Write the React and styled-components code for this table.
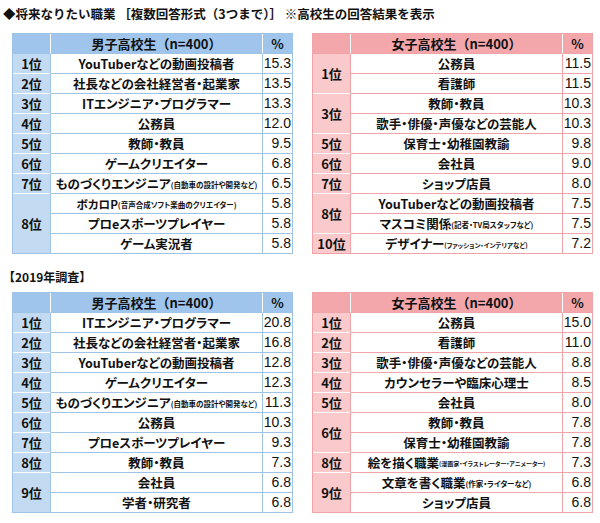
import React from "react";
import styled, { createGlobalStyle } from "styled-components";

const GlobalStyle = createGlobalStyle`
  body {
    margin: 0;
    background: #fff;
    color: #111;
    font-family: "Noto Sans CJK JP", "Noto Sans", sans-serif;
  }
`;

const palettes = {
  boys: { head: "#9fc5ec", rank: "#c3daf3", line: "#9fc3e6" },
  girls: { head: "#f4a7ab", rank: "#f9c9cc", line: "#f1a4a8" },
};

const Page = styled.div`
  width: 600px;
  height: 523px;
  padding: 6px 0 0 3px;
  box-sizing: border-box;
`;

const Title = styled.div`
  font-size: ${(p) => p.$size || 12}px;
  font-weight: 700;
  line-height: 16px;
  white-space: nowrap;
`;

const Section = styled.div`
  display: flex;
  gap: 19px;
  margin: ${(p) => p.$top}px 0 15px 9px;
`;

const Grid = styled.div`
  display: grid;
  grid-template-columns: 38px 1fr 30px;
  grid-auto-rows: 20px;
  width: 281px;
  box-sizing: border-box;
  border-top: 1px solid ${(p) => p.$pal.line};
  border-left: 1px solid ${(p) => p.$pal.line};
`;

const HeadCell = styled.div`
  grid-column: ${(p) => p.$col};
  background: ${(p) => p.$pal.head};
  border-right: 1px solid ${(p) => (p.$col === 3 ? p.$pal.line : "#fff")};
  border-bottom: 1px solid ${(p) => p.$pal.line};
  box-sizing: border-box;
  display: flex;
  align-items: center;
  justify-content: center;
  font-size: 13px;
  font-weight: 700;
  white-space: nowrap;
`;

const RankCell = styled.div`
  grid-column: 1;
  grid-row: span ${(p) => p.$span};
  background: ${(p) => p.$pal.rank};
  border-right: 1px solid ${(p) => p.$pal.line};
  border-bottom: 1px solid ${(p) => (p.$last ? p.$pal.line : "#fdfdfd")};
  box-sizing: border-box;
  display: flex;
  align-items: center;
  justify-content: center;
  font-size: 13px;
  font-weight: 700;
  font-feature-settings: "palt";
`;

const NameCell = styled.div`
  grid-column: 2;
  border-right: 1px solid ${(p) => p.$pal.line};
  border-bottom: 1px solid ${(p) => p.$pal.line};
  box-sizing: border-box;
  display: flex;
  align-items: center;
  justify-content: center;
  font-size: 12.5px;
  font-weight: 700;
  font-feature-settings: "palt";
  white-space: nowrap;
  overflow: hidden;
`;

const Main = styled.span`
  font-size: ${(p) => p.$size || 12.5}px;
`;

const Note = styled.span`
  font-size: ${(p) => p.$size || 7.5}px;
  margin-top: 2px;
`;

const ValueCell = styled.div`
  grid-column: 3;
  border-right: 1px solid ${(p) => p.$pal.line};
  border-bottom: 1px solid ${(p) => p.$pal.line};
  box-sizing: border-box;
  padding-right: 1px;
  text-align: right;
  line-height: 19px;
  font-family: "Liberation Sans", Arial, sans-serif;
  font-size: 14px;
`;

const boys2024 = [
  { rank: "1位", items: [{ name: "YouTuberなどの動画投稿者", value: "15.3" }] },
  { rank: "2位", items: [{ name: "社長などの会社経営者・起業家", value: "13.5" }] },
  { rank: "3位", items: [{ name: "ITエンジニア・プログラマー", value: "13.3" }] },
  { rank: "4位", items: [{ name: "公務員", value: "12.0" }] },
  { rank: "5位", items: [{ name: "教師・教員", value: "9.5" }] },
  { rank: "6位", items: [{ name: "ゲームクリエイター", value: "6.8" }] },
  { rank: "7位", items: [{ name: "ものづくりエンジニア", note: "(自動車の設計や開発など)", value: "6.5" }] },
  {
    rank: "8位",
    items: [
      { name: "ボカロP", size: 11.5, note: "(音声合成ソフト楽曲のクリエイター)", noteSize: 7.5, value: "5.8" },
      { name: "プロeスポーツプレイヤー", value: "5.8" },
      { name: "ゲーム実況者", value: "5.8" },
    ],
  },
];

const girls2024 = [
  { rank: "1位", items: [{ name: "公務員", value: "11.5" }, { name: "看護師", value: "11.5" }] },
  {
    rank: "3位",
    items: [
      { name: "教師・教員", value: "10.3" },
      { name: "歌手・俳優・声優などの芸能人", value: "10.3" },
    ],
  },
  { rank: "5位", items: [{ name: "保育士・幼稚園教諭", value: "9.8" }] },
  { rank: "6位", items: [{ name: "会社員", value: "9.0" }] },
  { rank: "7位", items: [{ name: "ショップ店員", value: "8.0" }] },
  {
    rank: "8位",
    items: [
      { name: "YouTuberなどの動画投稿者", value: "7.5" },
      { name: "マスコミ関係", note: "(記者・TV局スタッフなど)", value: "7.5" },
    ],
  },
  { rank: "10位", items: [{ name: "デザイナー", note: "(ファッション・インテリアなど)", noteSize: 6.5, value: "7.2" }] },
];

const boys2019 = [
  { rank: "1位", items: [{ name: "ITエンジニア・プログラマー", value: "20.8" }] },
  { rank: "2位", items: [{ name: "社長などの会社経営者・起業家", value: "16.8" }] },
  { rank: "3位", items: [{ name: "YouTuberなどの動画投稿者", value: "12.8" }] },
  { rank: "4位", items: [{ name: "ゲームクリエイター", value: "12.3" }] },
  { rank: "5位", items: [{ name: "ものづくりエンジニア", note: "(自動車の設計や開発など)", value: "11.3" }] },
  { rank: "6位", items: [{ name: "公務員", value: "10.3" }] },
  { rank: "7位", items: [{ name: "プロeスポーツプレイヤー", value: "9.3" }] },
  { rank: "8位", items: [{ name: "教師・教員", value: "7.3" }] },
  { rank: "9位", items: [{ name: "会社員", value: "6.8" }, { name: "学者・研究者", value: "6.8" }] },
];

const girls2019 = [
  { rank: "1位", items: [{ name: "公務員", value: "15.0" }] },
  { rank: "2位", items: [{ name: "看護師", value: "11.0" }] },
  { rank: "3位", items: [{ name: "歌手・俳優・声優などの芸能人", value: "8.8" }] },
  { rank: "4位", items: [{ name: "カウンセラーや臨床心理士", value: "8.5" }] },
  { rank: "5位", items: [{ name: "会社員", value: "8.0" }] },
  {
    rank: "6位",
    items: [
      { name: "教師・教員", value: "7.8" },
      { name: "保育士・幼稚園教諭", value: "7.8" },
    ],
  },
  {
    rank: "8位",
    items: [{ name: "絵を描く職業", note: "(漫画家・イラストレーター・アニメーター)", noteSize: 6, value: "7.3" }],
  },
  {
    rank: "9位",
    items: [
      { name: "文章を書く職業", note: "(作家・ライターなど)", value: "6.8" },
      { name: "ショップ店員", value: "6.8" },
    ],
  },
];

const RankTable = ({ pal, label, groups }) => (
  <Grid $pal={pal}>
    <HeadCell $pal={pal} $col={1} />
    <HeadCell $pal={pal} $col={2}>{label}（n=400）</HeadCell>
    <HeadCell $pal={pal} $col={3}>%</HeadCell>
    {groups.map((g, gi) => (
      <React.Fragment key={g.rank}>
        <RankCell $pal={pal} $span={g.items.length} $last={gi === groups.length - 1}>
          {g.rank}
        </RankCell>
        {g.items.map((it) => (
          <React.Fragment key={it.name}>
            <NameCell $pal={pal}>
              <Main $size={it.size}>{it.name}</Main>
              {it.note && <Note $size={it.noteSize}>{it.note}</Note>}
            </NameCell>
            <ValueCell $pal={pal}>{it.value}</ValueCell>
          </React.Fragment>
        ))}
      </React.Fragment>
    ))}
  </Grid>
);

const App = () => (
  <Page>
    <GlobalStyle />
    <Title $size={12.5}>◆将来なりたい職業 ［複数回答形式（3つまで）］ ※高校生の回答結果を表示</Title>
    <Section $top={11}>
      <RankTable pal={palettes.boys} label="男子高校生" groups={boys2024} />
      <RankTable pal={palettes.girls} label="女子高校生" groups={girls2024} />
    </Section>
    <Title>【2019年調査】</Title>
    <Section $top={7}>
      <RankTable pal={palettes.boys} label="男子高校生" groups={boys2019} />
      <RankTable pal={palettes.girls} label="女子高校生" groups={girls2019} />
    </Section>
  </Page>
);

export default App;
